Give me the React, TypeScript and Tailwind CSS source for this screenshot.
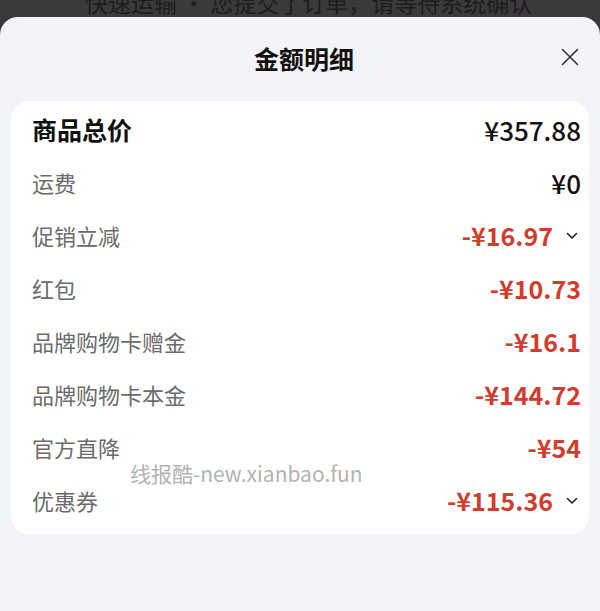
const FONT = '"Noto Sans CJK SC", "Noto Sans", sans-serif';

type Row = {
  label: string;
  value: string;
  red?: boolean;
  strong?: boolean;
  expand?: boolean;
};

const rows: Row[] = [
  { label: "商品总价", value: "¥357.88", strong: true },
  { label: "运费", value: "¥0" },
  { label: "促销立减", value: "-¥16.97", red: true, expand: true },
  { label: "红包", value: "-¥10.73", red: true },
  { label: "品牌购物卡赠金", value: "-¥16.1", red: true },
  { label: "品牌购物卡本金", value: "-¥144.72", red: true },
  { label: "官方直降", value: "-¥54", red: true },
  { label: "优惠券", value: "-¥115.36", red: true, expand: true },
];

function Chevron() {
  return (
    <svg width="12" height="8" viewBox="0 0 12 8" fill="none" className="ml-[13px] mr-[3px]">
      <polyline points="1.5,1.5 6,6 10.5,1.5" stroke="#222" strokeWidth="1.6" strokeLinecap="round" strokeLinejoin="round" />
    </svg>
  );
}

export default function App() {
  return (
    <div className="w-[600px] h-[611px] bg-[#3a3a3a] overflow-hidden flex flex-col" style={{ fontFamily: FONT }}>
      <div className="h-[17px] overflow-hidden shrink-0">
        <div className="pl-[85px] -mt-[11px] text-[23px] leading-[26px] text-[#1c1c1c] whitespace-nowrap">
          快速运输 · 您提交了订单，请等待系统确认
        </div>
      </div>

      <div className="flex-1 bg-[#f3f4f8] rounded-t-[18px] flex flex-col">
        <div className="relative h-[84px] flex items-center justify-center">
          <h1 className="text-[25px] font-bold text-[#111] ml-[8px]">金额明细</h1>
          <button className="absolute right-[21px] top-[31px] w-[18px] h-[18px]">
            <svg width="18" height="18" viewBox="0 0 18 18" fill="none">
              <path d="M1.5 1.5 L16.5 16.5 M16.5 1.5 L1.5 16.5" stroke="#333" strokeWidth="1.6" strokeLinecap="round" />
            </svg>
          </button>
        </div>

        <div className="relative mx-[11px] bg-white rounded-[18px] pt-[2px] pb-[7px]">
          {rows.map((r) => (
            <div key={r.label} className="h-[53px] flex items-center justify-between pl-[21px] pr-[8px]">
              <span
                className={
                  r.strong
                    ? "text-[25px] font-semibold text-[#111]"
                    : "text-[22px] text-[#6b6b6b]"
                }
              >
                {r.label}
              </span>
              <div className="flex items-center">
                <span
                  className={
                    r.red
                      ? "text-[25px] font-semibold text-[#d33b2c]"
                      : "text-[26px] font-medium text-[#111]"
                  }
                >
                  {r.value}
                </span>
                {r.expand && <Chevron />}
              </div>
            </div>
          ))}
          <div className="absolute left-[119px] top-[357px] text-[21px] text-[#b3b3b3] whitespace-nowrap pointer-events-none">
            线报酷-new.xianbao.fun
          </div>
        </div>
      </div>
    </div>
  );
}
